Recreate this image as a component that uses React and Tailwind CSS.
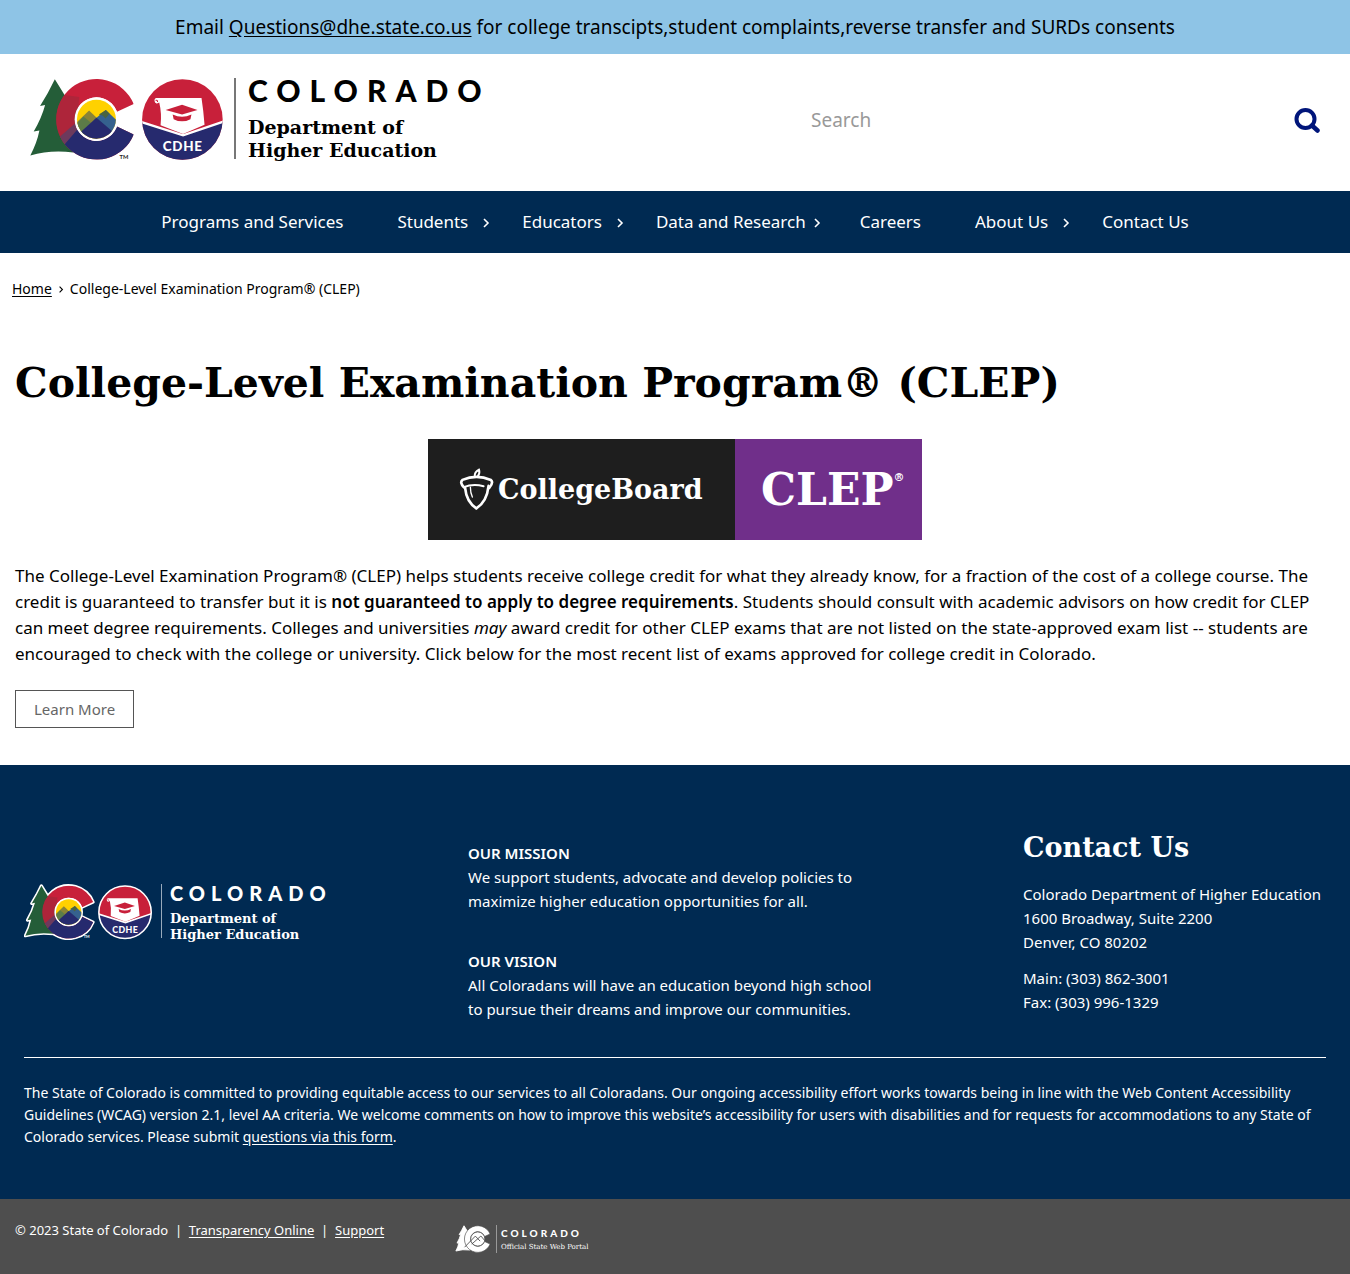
import React from "react";

const SANS = "font-['Noto_Sans','Open_Sans',sans-serif]";
const SLAB = "font-['DejaVu_Serif',serif]";

const C_SHAPE =
  "M340 131 L290 154 A65 65 0 1 0 290 198 L340 222 A120 120 0 1 1 340 131 Z";
const TREE =
  "M105 57 L84 98 L61 137 L76 134 Q66 172 42 213 L59 210 Q52 246 32 284 Q92 266 160 275 L178 110 L134 104 Z";

function Emblem({ id, outlined, className }) {
  const line = outlined
    ? { stroke: "#fff", strokeWidth: 7, strokeLinejoin: "round" }
    : {};
  return (
    <svg viewBox={outlined ? "26 50 586 252" : "31 55 575 244"} className={className} aria-hidden="true">
      <defs>
        <clipPath id={id + "-c"}>
          <path d={C_SHAPE} />
        </clipPath>
        <clipPath id={id + "-sun"}>
          <circle cx="229" cy="176" r="58" />
        </clipPath>
        <clipPath id={id + "-badge"}>
          <circle cx="485" cy="177" r="120" />
        </clipPath>
      </defs>
      {outlined && <path d={TREE} {...line} strokeWidth="14" />}
      {outlined && <path d={C_SHAPE} {...line} strokeWidth="14" />}
      <path d={TREE} fill="#245d38" />
      <g clipPath={`url(#${id}-c)`}>
        <rect x="100" y="50" width="250" height="250" fill="#c8203a" />
        <path d={TREE} fill="#8f2c3c" opacity="0.45" />
        <path d="M104 242 L166 188 L200 220 L150 290 Z" fill="#6d3a5d" />
        <path d="M130 256 L178 200 L230 180 L350 190 L350 300 L160 300 Z" fill="#262a6e" />
      </g>
      <circle cx="229" cy="176" r="65" fill="#fff" />
      <g clipPath={`url(#${id}-sun)`}>
        <rect x="165" y="110" width="130" height="130" fill="#ffd100" />
        <path d="M165 190 L207 150 L232 174 L232 240 L165 240 Z" fill="#8a8436" />
        <path d="M150 214 L190 168 L212 186 L180 240 Z" fill="#5c7c48" />
        <path d="M222 178 L257 149 L300 190 L270 230 Z" fill="#35618e" />
        <path d="M236 162 L257 149 L268 160 L256 174 L247 165 Z" fill="#4a6440" />
        <path d="M165 230 L229 172 L292 226 L292 245 L165 245 Z" fill="#262a6e" />
      </g>
      <text x="298" y="294" fontSize="17" fontWeight="700" fontFamily="Lato, sans-serif" fill={outlined ? "#fff" : "#222"}>
        TM
      </text>

      <g clipPath={`url(#${id}-badge)`}>
        <rect x="360" y="50" width="250" height="250" fill="#c8203a" />
        <path d="M360 184 L487 224 L610 182 L610 300 L360 300 Z" fill="#262a6e" />
        <path d="M360 184 L487 224 L610 182" fill="none" stroke="#fff" strokeWidth="7" />
      </g>
      <path d="M408 113 L542 113 Q548 152 551 193 L487 220 L420 194 Q424 158 416 126 Q404 134 402 122 Q401 114 408 113 Z" fill="#fff" />
      <path d="M405 120 Q411 118 411 125" fill="none" stroke="#c8203a" strokeWidth="3" />
      <path d="M435 149 L484 133 L530 149 L484 162 Z" fill="#c8203a" />
      <path d="M456 162 Q484 176 512 162 L509 176 Q484 189 459 176 Z" fill="#c8203a" />
      <text x="486" y="272" textAnchor="middle" fontSize="40" fontWeight="900" fontFamily="Lato, sans-serif" className="tracking-wider" fill="#fff">
        CDHE
      </text>
      {outlined && <circle cx="485" cy="177" r="119" fill="none" stroke="#fff" strokeWidth="7" />}
    </svg>
  );
}

function PortalEmblem() {
  return (
    <svg viewBox="26 50 320 252" className="h-7 w-9" aria-hidden="true">
      <path d={TREE} fill="#fff" stroke="#fff" strokeWidth="8" />
      <path d={C_SHAPE} fill="#fff" stroke="#4e4e4e" strokeWidth="6" />
      <circle cx="229" cy="176" r="64" fill="#fff" stroke="#4e4e4e" strokeWidth="7" />
      <path d="M110 250 L207 150 L250 195 M175 222 L257 149 L292 190" fill="none" stroke="#4e4e4e" strokeWidth="8" />
    </svg>
  );
}

function Chevron({ className }) {
  return (
    <svg viewBox="0 0 8 10" className={"w-2 " + className} aria-hidden="true">
      <path d="M2 1 L6 5 L2 9" fill="none" stroke="currentColor" strokeWidth="1.6" />
    </svg>
  );
}

const NAV = [
  { label: "Programs and Services" },
  { label: "Students", gap: "ml-[14px]" },
  { label: "Educators", gap: "ml-[14px]" },
  { label: "Data and Research", gap: "ml-[7px]" },
  { label: "Careers" },
  { label: "About Us", gap: "ml-[14px]" },
  { label: "Contact Us" },
];

function Acorn() {
  return (
    <svg viewBox="116 106 105 130" className="h-[43px] w-[35px]" fill="none" stroke="#fff" strokeLinecap="round" aria-hidden="true">
      <path d="M163 132 Q162 118 176 111 Q180 122 172 132" strokeWidth="6" />
      <path d="M130 164 Q117 150 126 142 Q168 124 212 142 Q221 150 207 166" strokeWidth="8" />
      <path d="M130 164 Q158 152 190 161" strokeWidth="6" />
      <path d="M134 166 Q138 208 168 228 Q200 208 205 160" strokeWidth="8" />
      <path d="M150 164 Q150 180 156 194" strokeWidth="4" />
    </svg>
  );
}

export default function App() {
  return (
    <div className={"flex min-h-screen flex-col bg-white text-black " + SANS}>
      <div className="bg-[#8ec4e6] px-4 py-[14px] text-center text-[19px] leading-[26px]">
        Email{" "}
        <a href="mailto:Questions@dhe.state.co.us" className="underline underline-offset-2">
          Questions@dhe.state.co.us
        </a>{" "}
        for college transcipts,student complaints,reverse transfer and SURDs consents
      </div>

      <header className="flex items-start justify-between px-[30px] pt-6 pb-[30px]">
        <a href="#home" className="flex items-start text-black">
          <Emblem id="head" className="h-[83px] w-[193px]" />
          <div className="ml-[11px] flex h-[81px] flex-col border-l-2 border-[#777] pl-3">
            <span className="font-['Lato',sans-serif] text-[30px] leading-6 font-black tracking-[0.3em]">COLORADO</span>
            <span className={"mt-[14px] text-[19px] leading-[23px] font-bold " + SLAB}>
              Department of
              <br />
              Higher Education
            </span>
          </div>
        </a>
        <form role="search" className="mt-[22px] flex w-[509px] items-center" onSubmit={(e) => e.preventDefault()}>
          <input
            type="search"
            aria-label="Search"
            placeholder="Search"
            className="min-w-0 flex-1 text-[19px] leading-10 outline-none placeholder:text-[#999]"
          />
          <button type="submit" aria-label="Submit search">
            <svg viewBox="0 0 26 26" className="size-[26px]" fill="none" stroke="#00157a" aria-hidden="true">
              <circle cx="11.5" cy="12" r="9" strokeWidth="4" />
              <path d="M18 18.5 L23.5 23.5" strokeWidth="4.5" strokeLinecap="round" />
            </svg>
          </button>
        </form>
      </header>

      <nav className="bg-[#002a52] text-[17px] leading-[62px] text-white">
        <ul className="flex flex-wrap justify-center gap-x-[54px]">
          {NAV.map((n) => (
            <li key={n.label} className="relative">
              <a href="#nav">{n.label}</a>
              {n.gap && (
                <span className={"absolute top-[27px] left-full " + n.gap}>
                  <Chevron className="block h-[10px]" />
                </span>
              )}
            </li>
          ))}
        </ul>
      </nav>

      <main className="px-[15px] pb-[37px]">
        <nav aria-label="Breadcrumb" className="-ml-[3px] flex items-center pt-[25px] text-[14px] leading-[22px]">
          <a href="#home" className="underline underline-offset-2">Home</a>
          <Chevron className="mx-[5px] h-[7px]" />
          <span>College-Level Examination Program® (CLEP)</span>
        </nav>

        <h1 className={"mt-[53px] text-[41px] leading-[60px] font-bold " + SLAB}>
          College-Level Examination Program® (CLEP)
        </h1>

        <div role="img" aria-label="CollegeBoard CLEP" className={"mx-auto mt-[26px] flex h-[101px] w-[494px] font-bold text-white " + SLAB}>
          <div className="flex w-[307px] items-center bg-[#1e1e1e] pl-[31px]">
            <Acorn />
            <span className="ml-1 text-[27px] leading-10">CollegeBoard</span>
          </div>
          <div className="flex flex-1 items-center bg-[#702f8a] pl-[26px]">
            <span className="text-[44px] leading-none">CLEP</span>
            <span className="mb-6 text-[11px] leading-none">®</span>
          </div>
        </div>

        <p className="mt-[23px] text-[17px] leading-[26px]">
          The College-Level Examination Program® (CLEP) helps students receive college credit for what they already
          know, for a fraction of the cost of a college course. The credit is guaranteed to transfer but it is{" "}
          <strong className="font-semibold">not guaranteed to apply to degree requirements</strong>. Students should
          consult with academic advisors on how credit for CLEP can meet degree requirements. Colleges and
          universities <em>may</em> award credit for other CLEP exams that are not listed on the state-approved exam
          list -- students are encouraged to check with the college or university. Click below for the most recent
          list of exams approved for college credit in Colorado.
        </p>

        <a href="#learn" className="mt-[23px] inline-block border border-[#555] px-[18px] text-[15px] leading-9 text-[#666]">
          Learn More
        </a>
      </main>

      <footer className="flex flex-1 flex-col text-white">
        <div className="bg-[#002a52] px-6 pt-[60px] pb-[51px]">
          <div className="grid grid-cols-[444fr_555fr_303fr] text-[15px] leading-6">
            <a href="#home" className="mt-[59px] flex items-start">
              <Emblem id="foot" outlined className="h-[56px] w-[129px]" />
              <div className="ml-2 flex h-[54px] flex-col border-l border-[#9ab] pl-2">
                <span className="font-['Lato',sans-serif] text-[20px] leading-[18px] font-black tracking-[0.3em]">COLORADO</span>
                <span className={"mt-[9px] text-[13px] leading-4 font-bold " + SLAB}>
                  Department of
                  <br />
                  Higher Education
                </span>
              </div>
            </a>
            <div className="max-w-[420px] pt-4">
              <h3 className="font-semibold">OUR MISSION</h3>
              <p>We support students, advocate and develop policies to maximize higher education opportunities for all.</p>
              <h3 className="mt-9 font-semibold">OUR VISION</h3>
              <p>All Coloradans will have an education beyond high school to pursue their dreams and improve our communities.</p>
            </div>
            <div>
              <h2 className={"text-[27px] leading-[46px] font-bold " + SLAB}>Contact Us</h2>
              <p className="mt-[11px]">
                Colorado Department of Higher Education
                <br />
                1600 Broadway, Suite 2200
                <br />
                Denver, CO 80202
              </p>
              <p className="mt-3">
                Main: (303) 862-3001
                <br />
                Fax: (303) 996-1329
              </p>
            </div>
          </div>
          <p className="mt-9 border-t border-white pt-6 text-[14px] leading-[22px]">
            The State of Colorado is committed to providing equitable access to our services to all Coloradans. Our
            ongoing accessibility effort works towards being in line with the Web Content Accessibility Guidelines
            (WCAG) version 2.1, level AA criteria. We welcome comments on how to improve this website’s accessibility
            for users with disabilities and for requests for accommodations to any State of Colorado services. Please
            submit <a href="#form" className="underline underline-offset-2">questions via this form</a>.
          </p>
        </div>

        <div className="grid flex-1 grid-cols-[440fr_880fr] items-start bg-[#4e4e4e] px-[15px] pt-5 pb-5 text-[13px] leading-[22px]">
          <p>
            © 2023 State of Colorado &nbsp;|&nbsp;{" "}
            <a href="#transparency" className="underline underline-offset-2">Transparency Online</a> &nbsp;|&nbsp;{" "}
            <a href="#support" className="underline underline-offset-2">Support</a>
          </p>
          <a href="#portal" className="mt-[6px] flex items-start">
            <PortalEmblem />
            <div className="ml-[5px] flex h-7 flex-col border-l border-[#999] pt-[3px] pl-1">
              <span className="font-['Lato',sans-serif] text-[10px] leading-[10px] font-black tracking-[0.3em]">COLORADO</span>
              <span className={"mt-1 text-[7px] leading-[10px] " + SLAB}>Official State Web Portal</span>
            </div>
          </a>
        </div>
      </footer>
    </div>
  );
}
